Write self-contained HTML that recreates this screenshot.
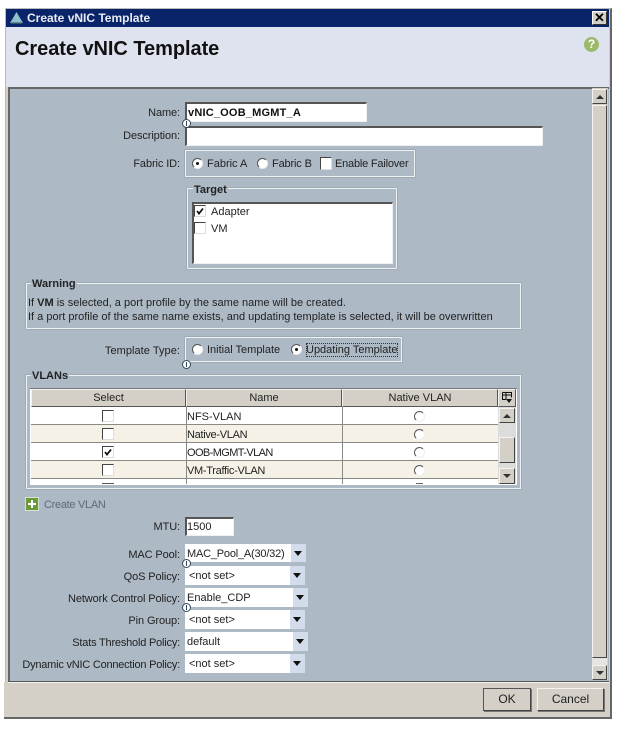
<!DOCTYPE html>
<html><head><meta charset="utf-8"><style>
html,body{margin:0;padding:0;background:#fff}
body{width:618px;height:747px;position:relative;overflow:hidden;font:11px/14px "Liberation Sans",sans-serif;color:#222}
#w{position:absolute;left:0;top:0;width:618px;height:747px;filter:blur(.35px)}
#w div,#w span.a{position:absolute;box-sizing:border-box}
.l{right:438px;text-align:right;white-space:nowrap;height:14px;margin-top:1px;letter-spacing:-.1px}
.t{white-space:nowrap;height:14px;margin-top:1px}
.in{background:#fff;border:2px solid;border-color:#555 #eef1f4 #eef1f4 #555;border-right-width:1px;border-bottom-width:1px}
.g{border:1px solid #eef1f4;box-shadow:0 0 0 .5px #8f9aa5}
.leg{background:#adb9c5;font-weight:bold;padding:0 1px;white-space:nowrap;height:14px;color:#222;margin-top:1px}
.sel{background:#fff;left:185px;height:19px}
.arr{right:0;top:0;bottom:0;width:15px;background:#d3dcea}
.arr:after{content:"";position:absolute;left:3px;top:7px;border:4px solid transparent;border-top:5px solid #111;border-bottom:0}
.cb{width:12px;height:12px;background:#fff;border:1px solid;border-color:#444 #ddd #ddd #444}
.rd{width:11px;height:11px;border-radius:50%;background:#fff;border:1px solid;border-color:#555 #eee #eee #555}
.rd.on:after{content:"";position:absolute;left:3px;top:3px;width:3px;height:3px;border-radius:50%;background:#111}
.i{width:9px;height:9px;border-radius:50%;background:#fff;border:1px solid #34465a;z-index:3}
.i:after{content:"";position:absolute;left:3px;top:1px;width:1px;height:5px;background:#34465a}
.hd{background:#d4d0c8;border:1px solid;border-color:#f4f3f0 #555 #555 #f4f3f0;text-align:center;line-height:16px;top:389px;height:18px}
.row{left:31px;width:467px;height:18px;border-bottom:1px solid #8a8a84}
.sb{background:#d4d0c8;border:1px solid;border-color:#f4f3f0 #444 #444 #f4f3f0}
.up:after,.dn:after{content:"";position:absolute;left:3px;top:5px;border:4px solid transparent}
.up:after{border-bottom:4px solid #333;border-top:0}
.dn:after{border-top:4px solid #333;border-bottom:0}
.btn{background:#d4d0c8;text-align:center;line-height:20px;font-size:12px;border:1px solid;border-color:#f4f3f0 #444 #444 #f4f3f0;box-shadow:1px 1px 0 #777}
</style></head><body><div id="w">
<div style="left:5px;top:8px;width:607px;height:711px;background:#d4d0c8;border:1px solid #bbb;border-right:2px solid #666;border-bottom:2px solid #666"></div>
<div style="left:4px;top:682px;width:4px;height:37px;background:#d4d0c8;border-bottom:2px solid #666"></div>
<div style="left:6px;top:9px;width:603px;height:18px;background:#0a246a"></div>
<svg style="position:absolute;left:9px;top:11px" width="15" height="14"><path d="M7.500 1 L11 7 L14 12 H1 L4 7Z" fill="#8fc0cc"/><path d="M2 11 H13 V12.500 H2Z" fill="#5a8a80"/></svg>
<div class="t" style="left:27px;top:10px;color:#e8ecf4;font-weight:bold;font-size:12px">Create vNIC Template</div>
<div style="left:592px;top:11px;width:15px;height:14px;background:#d4d0c8;border:1px solid;border-color:#fff #333 #333 #fff;color:#000;text-align:center;font:bold 13px/12px 'Liberation Sans',sans-serif">✕</div>
<div style="left:6px;top:27px;width:603px;height:60px;background:#dfe3ef"></div>
<div class="t" style="left:15px;top:36px;height:24px;font:bold 20px/24px 'Liberation Sans',sans-serif;color:#111;letter-spacing:-.05px">Create vNIC Template</div>
<div style="left:584px;top:37px;width:15px;height:15px;border-radius:50%;background:#9dba6a;color:#fff;text-align:center;font:bold 12px/15px 'Liberation Sans',sans-serif">?</div>

<div style="left:8px;top:87px;width:601px;height:594px;background:#adb9c5;border-top:2px solid #666;border-left:2px solid #666"></div>
<div style="left:8px;top:681px;width:601px;height:1px;background:#555"></div>
<div style="left:8px;top:682px;width:601px;height:1px;background:#f2f2ef"></div>
<div style="left:592px;top:88px;width:16px;height:592px;background:#d4d0c8"></div>
<div class="sb up" style="left:592px;top:89px;width:15px;height:15px"></div>
<div class="sb" style="left:592px;top:105px;width:15px;height:553px"></div>
<div style="left:592px;top:658px;width:15px;height:7px;background:#e6e4e0"></div>
<div class="sb dn" style="left:592px;top:665px;width:15px;height:15px"></div>

<div class="l" style="top:105px">Name:</div>
<div class="in" style="left:185px;top:102px;width:182px;height:20px"></div>
<div class="t" style="left:188px;top:105px;font-weight:bold;color:#111;letter-spacing:.2px">vNIC_OOB_MGMT_A</div>
<div class="i" style="left:182px;top:119px"></div>
<div class="l" style="top:128px">Description:</div>
<div class="in" style="left:185px;top:126px;width:358px;height:20px"></div>
<div class="l" style="top:156px">Fabric ID:</div>
<div class="g" style="left:185px;top:150px;width:230px;height:27px"></div>
<div class="rd on" style="left:192px;top:158px"></div><div class="t" style="left:207px;top:156px">Fabric A</div>
<div class="rd" style="left:257px;top:158px"></div><div class="t" style="left:272px;top:156px;letter-spacing:-.15px">Fabric B</div>
<div class="cb" style="left:320px;top:157px;width:12px;height:13px"></div><div class="t" style="left:335px;top:156px;letter-spacing:-.2px">Enable Failover</div>

<div class="g" style="left:187px;top:188px;width:210px;height:81px"></div>
<div class="leg" style="left:193px;top:182px">Target</div>
<div class="in" style="left:192px;top:202px;width:201px;height:62px"></div>
<div class="cb" style="left:194px;top:205px"></div>
<svg style="position:absolute;left:195px;top:206px" width="11" height="11"><path d="M2 5 L4 7.500 L8 2.500" fill="none" stroke="#111" stroke-width="1.800"/></svg>
<div class="t" style="left:211px;top:204px">Adapter</div>
<div class="cb" style="left:194px;top:222px"></div>
<div class="t" style="left:211px;top:221px">VM</div>

<div class="g" style="left:26px;top:283px;width:495px;height:46px"></div>
<div class="leg" style="left:31px;top:276px">Warning</div>
<div class="t" style="left:28px;top:295px">If <b>VM</b> is selected, a port profile by the same name will be created.</div>
<div class="t" style="left:28px;top:309px">If a port profile of the same name exists, and updating template is selected, it will be overwritten</div>

<div class="l" style="top:343px;letter-spacing:.05px">Template Type:</div>
<div class="g" style="left:185px;top:337px;width:217px;height:25px"></div>
<div class="rd" style="left:192px;top:344px"></div><div class="t" style="left:207px;top:342px">Initial Template</div>
<div class="rd on" style="left:291px;top:344px"></div><div class="t" style="left:306px;top:342px;outline:1px dotted #333;outline-offset:-1px">Updating Template</div>
<div class="i" style="left:182px;top:360px"></div>

<div class="g" style="left:26px;top:375px;width:495px;height:114px"></div>
<div class="leg" style="left:31px;top:368px">VLANs</div>
<div style="left:30px;top:388px;width:487px;height:97px;background:#fff;border-top:1px solid #777"></div>
<div class="hd" style="left:31px;width:155px">Select</div>
<div class="hd" style="left:186px;width:156px">Name</div>
<div class="hd" style="left:342px;width:156px">Native VLAN</div>
<div class="hd" style="left:498px;width:18px"></div>
<svg style="position:absolute;left:501px;top:391px" width="12" height="13"><path d="M1.500 1.500H10.500V6.500M1.500 1.500V8.500H5M1.500 4H10.500M5 1.500V8.500" fill="none" stroke="#111"/><path d="M5 8H11L8 12Z" fill="#111"/></svg>
<div style="left:31px;top:407px;width:467px;height:78px;background:#fff"></div>
<div class="row" style="top:407px;background:#fff"></div>
<div class="row" style="top:425px;background:#f5f1e7"></div>
<div class="row" style="top:443px;background:#fff"></div>
<div class="row" style="top:461px;background:#f5f1e7"></div>
<div style="left:186px;top:407px;width:1px;height:77px;background:#8a8a84"></div>
<div style="left:342px;top:407px;width:1px;height:77px;background:#8a8a84"></div>
<div class="cb" style="left:102px;top:410px"></div><div class="t" style="left:187px;top:409px">NFS-VLAN</div><div class="rd" style="left:414px;top:411px"></div>
<div class="cb" style="left:102px;top:428px"></div><div class="t" style="left:187px;top:427px;letter-spacing:-.3px">Native-VLAN</div><div class="rd" style="left:414px;top:429px"></div>
<div class="cb" style="left:102px;top:446px"></div>
<svg style="position:absolute;left:103px;top:447px" width="11" height="11"><path d="M2 5 L4 7.500 L8 2.500" fill="none" stroke="#111" stroke-width="1.800"/></svg>
<div class="t" style="left:187px;top:445px;letter-spacing:-.6px">OOB-MGMT-VLAN</div><div class="rd" style="left:414px;top:447px"></div>
<div class="cb" style="left:102px;top:464px"></div><div class="t" style="left:187px;top:463px;letter-spacing:-.3px">VM-Traffic-VLAN</div><div class="rd" style="left:414px;top:465px"></div>
<div style="left:102px;top:483px;width:12px;height:1px;background:#555"></div>
<div style="left:416px;top:483px;width:7px;height:1px;background:#666"></div>
<div style="left:498px;top:407px;width:18px;height:77px;background:#dcdcdc"></div>
<div class="sb up" style="left:499px;top:408px;width:16px;height:15px"></div>
<div class="sb" style="left:499px;top:437px;width:16px;height:26px"></div>
<div class="sb dn" style="left:499px;top:468px;width:16px;height:16px"></div>

<div style="left:25px;top:497px;width:14px;height:14px;background:#6a9a3a;border:1px solid #d8e4d0"></div>
<div style="left:28px;top:503px;width:8px;height:2px;background:#fff"></div>
<div style="left:31px;top:500px;width:2px;height:8px;background:#fff"></div>
<div class="t" style="left:44px;top:497px;color:#5c6c7c;letter-spacing:-.3px">Create VLAN</div>

<div class="l" style="top:519px">MTU:</div>
<div class="in" style="left:185px;top:517px;width:49px;height:19px"></div>
<div class="t" style="left:187px;top:519px">1500</div>

<div class="l" style="top:547px;letter-spacing:-.1px">MAC Pool:</div>
<div class="sel" style="top:544px;width:121px;height:18px"><div class="arr"></div></div>
<div class="t" style="left:187px;top:546px;letter-spacing:-.2px">MAC_Pool_A(30/32)</div>
<div class="i" style="left:182px;top:559px"></div>
<div class="l" style="top:569px">QoS Policy:</div>
<div class="sel" style="top:566px;width:120px"><div class="arr"></div></div>
<div class="t" style="left:189px;top:568px">&lt;not set&gt;</div>
<div class="l" style="top:591px">Network Control Policy:</div>
<div class="sel" style="top:588px;width:123px"><div class="arr"></div></div>
<div class="t" style="left:187px;top:590px">Enable_CDP</div>
<div class="i" style="left:182px;top:603px"></div>
<div class="l" style="top:613px">Pin Group:</div>
<div class="sel" style="top:610px;width:120px"><div class="arr"></div></div>
<div class="t" style="left:189px;top:612px">&lt;not set&gt;</div>
<div class="l" style="top:635px;letter-spacing:-.2px">Stats Threshold Policy:</div>
<div class="sel" style="top:632px;width:123px"><div class="arr"></div></div>
<div class="t" style="left:187px;top:634px">default</div>
<div class="l" style="top:657px;letter-spacing:-.22px">Dynamic vNIC Connection Policy:</div>
<div class="sel" style="top:654px;width:120px"><div class="arr"></div></div>
<div class="t" style="left:189px;top:656px">&lt;not set&gt;</div>

<div class="btn" style="left:483px;top:688px;width:48px;height:23px;border-color:#555 #444 #444 #555">OK</div>
<div class="btn" style="left:537px;top:688px;width:67px;height:23px">Cancel</div>
</div></body></html>
